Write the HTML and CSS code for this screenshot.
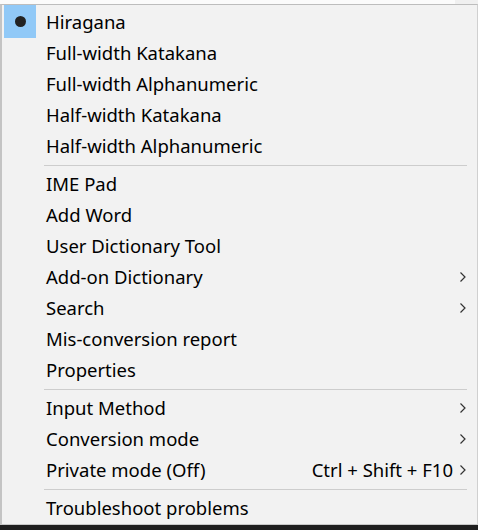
FILE: index.html
```html
<!DOCTYPE html>
<html>
<head>
<meta charset="utf-8">
<link rel="stylesheet" href="styles.css">
</head>
<body>
<div class="top-strip"><div class="top-right"></div></div>
<div class="menu">
  <div class="item checked"><span class="check"><span class="dot"></span></span><span class="label">Hiragana</span></div>
  <div class="item"><span class="check"></span><span class="label">Full-width Katakana</span></div>
  <div class="item"><span class="check"></span><span class="label">Full-width Alphanumeric</span></div>
  <div class="item"><span class="check"></span><span class="label">Half-width Katakana</span></div>
  <div class="item"><span class="check"></span><span class="label">Half-width Alphanumeric</span></div>
  <div class="sep"></div>
  <div class="item"><span class="check"></span><span class="label">IME Pad</span></div>
  <div class="item"><span class="check"></span><span class="label">Add Word</span></div>
  <div class="item"><span class="check"></span><span class="label">User Dictionary Tool</span></div>
  <div class="item"><span class="check"></span><span class="label">Add-on Dictionary</span><span class="arrow"><svg width="8" height="12" viewBox="0 0 8 12"><path d="M1.5 1.5 L6 6 L1.5 10.5" fill="none" stroke="#333" stroke-width="1.2"/></svg></span></div>
  <div class="item"><span class="check"></span><span class="label">Search</span><span class="arrow"><svg width="8" height="12" viewBox="0 0 8 12"><path d="M1.5 1.5 L6 6 L1.5 10.5" fill="none" stroke="#333" stroke-width="1.2"/></svg></span></div>
  <div class="item"><span class="check"></span><span class="label">Mis-conversion report</span></div>
  <div class="item"><span class="check"></span><span class="label">Properties</span></div>
  <div class="sep"></div>
  <div class="item"><span class="check"></span><span class="label">Input Method</span><span class="arrow"><svg width="8" height="12" viewBox="0 0 8 12"><path d="M1.5 1.5 L6 6 L1.5 10.5" fill="none" stroke="#333" stroke-width="1.2"/></svg></span></div>
  <div class="item"><span class="check"></span><span class="label">Conversion mode</span><span class="arrow"><svg width="8" height="12" viewBox="0 0 8 12"><path d="M1.5 1.5 L6 6 L1.5 10.5" fill="none" stroke="#333" stroke-width="1.2"/></svg></span></div>
  <div class="item"><span class="check"></span><span class="label">Private mode (Off)</span><span class="shortcut">Ctrl + Shift + F10</span><span class="arrow"><svg width="8" height="12" viewBox="0 0 8 12"><path d="M1.5 1.5 L6 6 L1.5 10.5" fill="none" stroke="#333" stroke-width="1.2"/></svg></span></div>
  <div class="sep"></div>
  <div class="item"><span class="check"></span><span class="label">Troubleshoot problems</span></div>
</div>
<div class="taskbar"></div>
</body>
</html>
```
FILE: styles.css
```css
html, body {
  margin: 0;
  padding: 0;
  background: #fbfbfb;
  width: 478px;
  height: 530px;
  overflow: hidden;
}
.top-strip {
  height: 4px;
  display: flex;
  justify-content: flex-end;
}
.top-right {
  width: 23px;
  background: #f0f0f0;
}
.menu {
  background: #f2f2f2;
  border-top: 1px solid #bdbdbd;
  border-left: 2px solid #c4c4c4;
  border-right: 1px solid #d0d0d0;
  border-bottom: 1px solid #c8c8c8;
  padding: 1px 0 1px 0;
  width: 475px;
  font-family: "Noto Sans", "Open Sans", sans-serif;
  font-size: 18.5px;
  color: #000;
}
.item {
  height: 31px;
  display: flex;
  align-items: center;
}
.check {
  width: 32px;
  height: 33px;
  margin-left: 2px;
  margin-right: 10px;
  flex: none;
  display: flex;
  align-items: center;
  justify-content: center;
}
.checked .check {
  background: #91c9f7;
}
.dot {
  width: 11px;
  height: 11px;
  border-radius: 50%;
  background: #222;
}
.label {
  flex: 1;
  white-space: nowrap;
}
.shortcut {
  white-space: nowrap;
}
.arrow {
  flex: none;
  display: flex;
  align-items: center;
  padding-left: 6px;
  padding-right: 10px;
}
.sep {
  height: 1px;
  background: #cdcdcd;
  margin: 4px 10px 2px 42px;
}
.taskbar {
  height: 10px;
  background: #1f1f1f;
}
```
